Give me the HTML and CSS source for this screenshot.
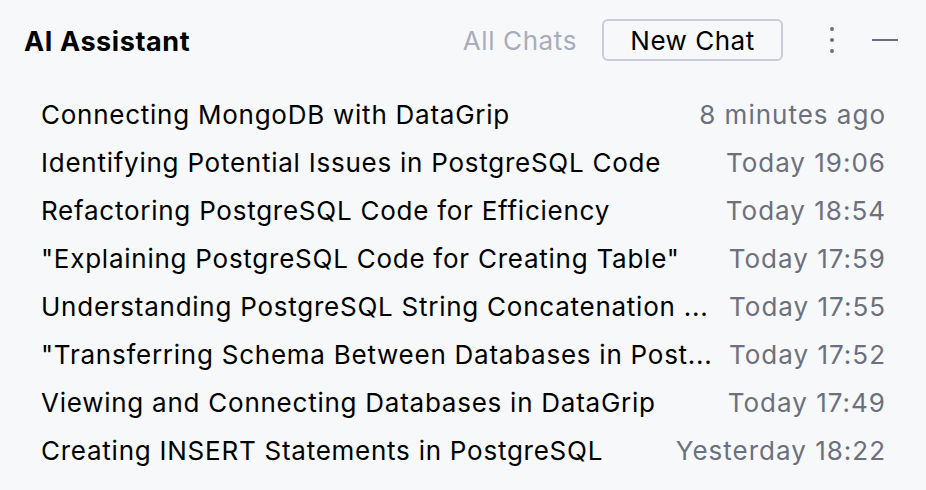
FILE: index.html
```html
<!DOCTYPE html>
<html>
<head>
<meta charset="utf-8">
<link rel="stylesheet" href="styles.css">
</head>
<body>
<div class="panel">
  <header class="header">
    <h1 class="title">AI Assistant</h1>
    <div class="actions">
      <span class="all-chats">All Chats</span>
      <button class="new-chat">New Chat</button>
      <span class="kebab"><i></i><i></i><i></i></span>
      <span class="minimize"></span>
    </div>
  </header>
  <ul class="chats">
    <li class="chat"><span class="name">Connecting MongoDB with DataGrip</span><span class="time">8 minutes ago</span></li>
    <li class="chat"><span class="name">Identifying Potential Issues in PostgreSQL Code</span><span class="time">Today 19:06</span></li>
    <li class="chat"><span class="name">Refactoring PostgreSQL Code for Efficiency</span><span class="time">Today 18:54</span></li>
    <li class="chat"><span class="name">"Explaining PostgreSQL Code for Creating Table"</span><span class="time">Today 17:59</span></li>
    <li class="chat"><span class="name">Understanding PostgreSQL String Concatenation ...</span><span class="time">Today 17:55</span></li>
    <li class="chat"><span class="name">"Transferring Schema Between Databases in Post...</span><span class="time">Today 17:52</span></li>
    <li class="chat"><span class="name">Viewing and Connecting Databases in DataGrip</span><span class="time">Today 17:49</span></li>
    <li class="chat"><span class="name">Creating INSERT Statements in PostgreSQL</span><span class="time">Yesterday 18:22</span></li>
  </ul>
</div>
</body>
</html>
```

FILE: styles.css
```css
* { box-sizing: border-box; }
html, body { margin: 0; padding: 0; background: #f7f8fa; }
body {
  font-family: Inter, "Noto Sans", "Liberation Sans", sans-serif;
  color: #000;
  width: 926px;
  height: 490px;
  overflow: hidden;
}
.panel { padding: 19px 28px 0 24px; }
.header {
  display: flex;
  align-items: center;
  justify-content: space-between;
  height: 42px;
}
.title {
  margin: 0;
  font-size: 27px;
  font-weight: 700;
  letter-spacing: 0.6px;
  padding-top: 2px;
}
.actions {
  display: flex;
  align-items: center;
}
.all-chats {
  font-size: 26px;
  letter-spacing: 0.6px;
  color: #a8adbd;
  margin-right: 25px;
}
.new-chat {
  font-family: inherit;
  font-size: 26px;
  letter-spacing: 0.5px;
  color: #000;
  background: transparent;
  border: 2px solid #c9ccd6;
  border-radius: 6px;
  width: 181px;
  height: 42px;
  padding: 0;
  margin-right: 47px;
}
.kebab {
  display: flex;
  flex-direction: column;
  gap: 7px;
  margin-right: 38px;
}
.kebab i {
  display: block;
  width: 4px;
  height: 4px;
  border-radius: 50%;
  background: #6c707e;
}
.minimize {
  display: block;
  width: 26px;
  height: 2px;
  background: #6c707e;
}
.chats {
  list-style: none;
  margin: 29px 0 0 0;
  padding: 0 12px 0 17px;
}
.chat {
  display: flex;
  justify-content: space-between;
  align-items: center;
  height: 48px;
  font-size: 26px;
  letter-spacing: 0.75px;
  white-space: nowrap;
}
.time { color: #6c707e; letter-spacing: 1px; }
```
